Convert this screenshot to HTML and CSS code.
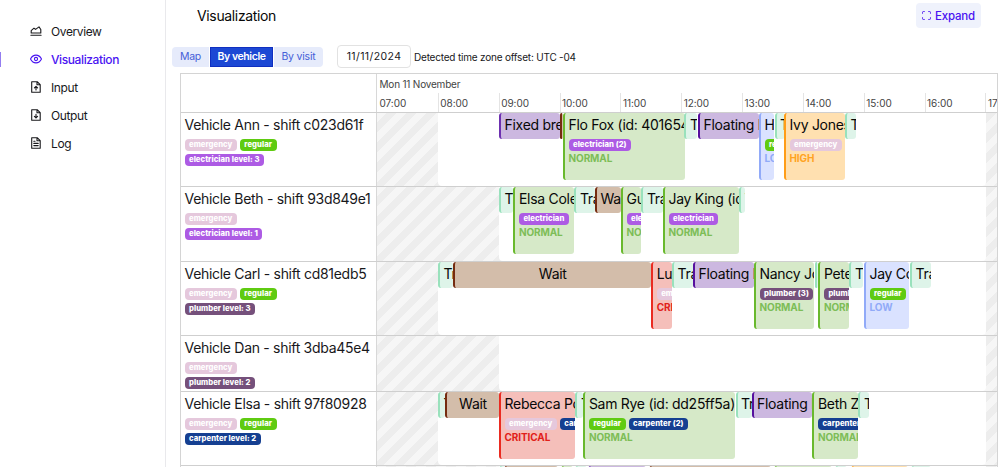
FILE: index.html
```html
<!DOCTYPE html>
<html lang="en">
<head>
<meta charset="utf-8">
<title>Visualization</title>
<link rel="stylesheet" href="styles.css">
</head>
<body>
<div class="app">
  <nav class="sidebar">
    <a class="nav"><svg class="ico" viewBox="0 0 12 12"><path d="M1.2 8V5.6L4 3.2l1.6 1.2L9 1.900l1.800 2.600V8zM.9 10.300h10.200"/></svg><span>Overview</span></a>
    <a class="nav active"><svg class="ico" viewBox="0 0 12 12"><path d="M.5 6C1.8 3.4 3.7 2.1 6 2.1S10.200 3.400 11.500 6C10.200 8.600 8.300 9.900 6 9.900S1.800 8.600.5 6z"/><circle cx="6" cy="6" r="1.600"/></svg><span>Visualization</span></a>
    <a class="nav"><svg class="ico" viewBox="0 0 12 12"><path d="M1.700.700h5.500l3 3v7.600H1.700zM7 .800v3h3M6 9V5.300M4.400 6.900L6 5.300l1.600 1.600"/></svg><span>Input</span></a>
    <a class="nav"><svg class="ico" viewBox="0 0 12 12"><path d="M1.700.700h5.500l3 3v7.600H1.700zM7 .800v3h3M6 5.200v3.700M4.400 7.300L6 8.900l1.600-1.600"/></svg><span>Output</span></a>
    <a class="nav"><svg class="ico" viewBox="0 0 12 12"><path d="M1.700.700h5.500l3 3v7.600H1.700zM7 .800v3h3M3.800 4.200h1.200M3.800 6.400h4.400M3.800 8.600h4.400"/></svg><span>Log</span></a>
  </nav>
  <main class="main">
    <header class="head">
      <h1 class="title">Visualization</h1>
      <button class="expand"><svg class="corners" viewBox="0 0 10 10"><path d="M.6 3V1.600q0-1 1-1H3M7 .6h1.400q1 0 1 1V3M9.400 7v1.400q0 1-1 1H7M3 9.400H1.600q-1 0-1-1V7"/></svg><span>Expand</span></button>
    </header>
    <div class="toolbar">
      <div class="tabs"><span class="tab map">Map</span><span class="tab on">By vehicle</span><span class="tab visit">By visit</span></div>
      <span class="date">11/11/2024</span>
      <span class="zone">Detected time zone offset: UTC -04</span>
    </div>
    <section class="chart">
      <div class="row axis">
        <div class="label"></div>
        <div class="scale">
          <div class="day">Mon 11 November</div>
          <div class="hours"><span>07:00</span><span>08:00</span><span>09:00</span><span>10:00</span><span>11:00</span><span>12:00</span><span>13:00</span><span>14:00</span><span>15:00</span><span>16:00</span><span>17:00</span></div>
        </div>
      </div>
      <div class="row">
        <div class="label"><div class="name">Vehicle Ann - shift c023d61f</div><div class="tags"><b class="tag emergency">emergency</b><b class="tag regular">regular</b></div><div class="tags"><b class="tag electrician">electrician level: 3</b></div></div>
        <div class="lane">
          <div class="shift" style="--x:61px;--w:547.5px"></div>
          <div class="item break" style="--x:122px;--w:61px"><p>Fixed break</p></div>
          <div class="item wait sliver" style="--x:183px;--w:3px"></div>
          <div class="item normal" style="--x:186px;--w:121.500px"><p>Flo Fox (id: 401654ab)</p><div class="tags"><b class="tag electrician">electrician (2)</b></div><em>NORMAL</em></div>
          <div class="item travel" style="--x:307.400px;--w:13px"><p>Travel</p></div>
          <div class="item float" style="--x:321px;--w:61px"><p>Floating break</p></div>
          <div class="item low" style="--x:382px;--w:15px"><p>Hugo</p><div class="tags"><b class="tag regular">regular</b></div><em>LOW</em></div>
          <div class="item travel" style="--x:397.500px;--w:10px"><p>Travel</p></div>
          <div class="item high" style="--x:407px;--w:61px"><p>Ivy Jones (id: 7</p><div class="tags"><b class="tag emergency">emergency</b><b class="tag electrician">electrician</b></div><em>HIGH</em></div>
          <div class="item travel" style="--x:468px;--w:10.500px"><p>Travel</p></div>
        </div>
      </div>
      <div class="row tall">
        <div class="label"><div class="name">Vehicle Beth - shift 93d849e1</div><div class="tags"><b class="tag emergency">emergency</b></div><div class="tags"><b class="tag electrician">electrician level: 1</b></div></div>
        <div class="lane">
          <div class="shift" style="--x:122px;--w:486.500px"></div>
          <div class="item travel" style="--x:122px;--w:14px"><p>Travel</p></div>
          <div class="item normal" style="--x:136.400px;--w:60.500px"><p>Elsa Cole (id</p><div class="tags"><b class="tag electrician">electrician</b></div><em>NORMAL</em></div>
          <div class="item travel" style="--x:197.400px;--w:20.500px"><p>Travel</p></div>
          <div class="item wait" style="--x:218px;--w:25.500px"><p>Wait</p></div>
          <div class="item normal" style="--x:244px;--w:20px"><p>Gus</p><div class="tags"><b class="tag electrician">electrician</b></div><em>NORMAL</em></div>
          <div class="item travel" style="--x:264.400px;--w:21.500px"><p>Travel</p></div>
          <div class="item normal" style="--x:286px;--w:76px"><p>Jay King (id: 2</p><div class="tags"><b class="tag electrician">electrician</b></div><em>NORMAL</em></div>
          <div class="item travel" style="--x:362px;--w:6px"><p>Travel</p></div>
        </div>
      </div>
      <div class="row">
        <div class="label"><div class="name">Vehicle Carl - shift cd81edb5</div><div class="tags"><b class="tag emergency">emergency</b><b class="tag regular">regular</b></div><div class="tags"><b class="tag plumber">plumber level: 3</b></div></div>
        <div class="lane">
          <div class="shift" style="--x:61px;--w:547.500px"></div>
          <div class="item travel" style="--x:61px;--w:14.500px"><p>Travel</p></div>
          <div class="item wait center" style="--x:75.500px;--w:198.500px"><p>Wait</p></div>
          <div class="item critical" style="--x:274.200px;--w:20.400px"><p>Luna</p><div class="tags"><b class="tag emergency">emergency</b></div><em>CRITICAL</em></div>
          <div class="item travel" style="--x:295px;--w:21px"><p>Travel</p></div>
          <div class="item float" style="--x:316px;--w:61px"><p>Floating break</p></div>
          <div class="item normal" style="--x:377px;--w:60px"><p>Nancy Jones</p><div class="tags"><b class="tag plumber">plumber (3)</b></div><em>NORMAL</em></div>
          <div class="item travel sliver" style="--x:438px;--w:3px"></div>
          <div class="item normal" style="--x:441.400px;--w:30.500px"><p>Peter</p><div class="tags"><b class="tag plumber">plumber</b></div><em>NORMAL</em></div>
          <div class="item travel" style="--x:472.400px;--w:14px"><p>Travel</p></div>
          <div class="item low" style="--x:487px;--w:45px"><p>Jay Cole</p><div class="tags"><b class="tag regular">regular</b><b class="tag plumber faint">plumber</b></div><em>LOW</em></div>
          <div class="item travel" style="--x:533px;--w:21px"><p>Travel</p></div>
        </div>
      </div>
      <div class="row short">
        <div class="label"><div class="name">Vehicle Dan - shift 3dba45e4</div><div class="tags"><b class="tag emergency">emergency</b></div><div class="tags"><b class="tag plumber">plumber level: 2</b></div></div>
        <div class="lane"><div class="shift" style="--x:122px;--w:486.500px"></div></div>
      </div>
      <div class="row">
        <div class="label"><div class="name">Vehicle Elsa - shift 97f80928</div><div class="tags"><b class="tag emergency">emergency</b><b class="tag regular">regular</b></div><div class="tags"><b class="tag carpenter">carpenter level: 2</b></div></div>
        <div class="lane">
          <div class="shift" style="--x:61px;--w:547.500px"></div>
          <div class="item travel" style="--x:61px;--w:7px"><p>Travel</p></div>
          <div class="item wait center" style="--x:68px;--w:54px"><p>Wait</p></div>
          <div class="item critical" style="--x:122px;--w:76px"><p>Rebecca Poe</p><div class="tags"><b class="tag emergency">emergency</b><b class="tag carpenter">carpenter</b></div><em>CRITICAL</em></div>
          <div class="item travel" style="--x:198.400px;--w:7.500px"><p>Travel</p></div>
          <div class="item normal" style="--x:206.400px;--w:152px"><p>Sam Rye (id: dd25ff5a)</p><div class="tags"><b class="tag regular">regular</b><b class="tag carpenter">carpenter (2)</b></div><em>NORMAL</em></div>
          <div class="item travel" style="--x:358.500px;--w:16px"><p>Travel</p></div>
          <div class="item float" style="--x:374.500px;--w:60.500px"><p>Floating break</p></div>
          <div class="item normal" style="--x:435.400px;--w:45.500px"><p>Beth Zhu</p><div class="tags"><b class="tag carpenter">carpenter</b></div><em>NORMAL</em></div>
          <div class="item travel" style="--x:481.400px;--w:10.500px"><p>Travel</p></div>
        </div>
      </div>
      <div class="row">
        <div class="label"></div>
        <div class="lane">
          <div class="shift" style="--x:122px;--w:486.500px"></div>
          <div class="item travel" style="--x:122px;--w:4px"></div>
          <div class="item wait" style="--x:127px;--w:54px"></div>
          <div class="item normal" style="--x:184px;--w:12px"></div>
          <div class="item travel" style="--x:198px;--w:12px"></div>
          <div class="item break" style="--x:211px;--w:58px"></div>
          <div class="item wait" style="--x:272px;--w:122px"></div>
          <div class="item normal" style="--x:397px;--w:58px"></div>
          <div class="item travel" style="--x:458px;--w:12px"></div>
          <div class="item high" style="--x:474px;--w:57px"></div>
          <div class="item travel" style="--x:534px;--w:20px"></div>
        </div>
      </div>
    </section>
  </main>
</div>
</body>
</html>
```
FILE: styles.css
```css
* { box-sizing: border-box; }
body { margin: 0; background: #fff; color: #18181b; font-family: Inter, "Liberation Sans", sans-serif; }
p, h1 { margin: 0; font-weight: 400; }
.app { display: flex; width: 1000px; height: 467px; overflow: hidden; }

.sidebar { width: 166px; flex: none; border-right: 1px solid #e9e9ec; padding-top: 17px; }
.nav { display: flex; align-items: center; height: 28px; padding-left: 30px; gap: 9px; font-size: 12px; letter-spacing: -.4px; }
.ico { width: 12px; height: 12px; fill: none; stroke: currentColor; stroke-width: 1.1; stroke-linejoin: round; stroke-linecap: round; }
.active { color: #4a14f2; font-weight: 500; background: linear-gradient(#937df0, #937df0) 0 7px / 1px 15px no-repeat; }

.main { flex: none; width: 834px; }
.head { display: flex; justify-content: space-between; align-items: center; height: 31px; padding: 0 19px 0 31px; }
.title { font-size: 14px; line-height: 20px; letter-spacing: -.35px; color: #080808; }
.expand { display: flex; align-items: center; gap: 4px; width: 65px; height: 25px; padding: 0 0 0 6px; border: 0; border-radius: 4px; background: #eff2fc; color: #4a14f2; font: 500 11.5px Inter, sans-serif; letter-spacing: -.2px; }
.corners { width: 9px; height: 9px; fill: none; stroke: currentColor; stroke-width: 1.1; flex: none; }

.toolbar { display: flex; align-items: center; height: 23px; margin: 14px 0 5px 6px; }
.tabs { display: flex; gap: 1px; }
.tab { display: grid; place-items: center; height: 20px; background: #e6ebfb; color: #4560d8; font-size: 10.5px; letter-spacing: -.2px; }
.map { width: 37px; border-radius: 4px 0 0 4px; }
.on { width: 63px; background: #1c48d4; border: 1px solid #102fc0; color: #fff; font-weight: 600; letter-spacing: -.4px; }
.visit { width: 49px; border-radius: 0 4px 4px 0; }
.date { display: grid; place-items: center; width: 74px; height: 23px; margin-left: 14px; border: 1px solid #e2e2e2; border-radius: 4px; font-size: 10.5px; letter-spacing: .4px; }
.zone { margin-left: 3px; font-size: 10px; letter-spacing: -.2px; white-space: nowrap; }

.chart { width: 818px; margin-left: 14px; border: solid #d4d4d4; border-width: 1px 1px 0; }
.row { display: grid; grid-template-columns: 196px 620px; height: 74px; border-bottom: 1px solid #cfcfcf; }
.axis { height: 39px; }
.tall { height: 75px; }
.short { height: 56px; }
.label { padding: 3px 0 0 3.500px; border-right: 1px solid #d8d8d8; overflow: hidden; }
.name { height: 18px; margin: 0 0 5px; font-size: 14px; line-height: 17px; letter-spacing: -.3px; white-space: nowrap; }
.tags { display: flex; gap: 3px; height: 12px; margin-bottom: 3px; }
.tag { flex: none; height: 12px; padding: 0 4.500px; border-radius: 4px; color: #fff; font-size: 7.700px; line-height: 12px; font-weight: 800; letter-spacing: .04px; white-space: nowrap; }
.emergency { background: #e5c8dc; }
.regular { background: #5fcb11; }
.electrician { background: #ad5be4; }
.plumber { background: #75507b; }
.carpenter { background: #153f91; }
.faint { opacity: .15; }

.scale { overflow: hidden; color: #444; font-size: 10px; letter-spacing: -.2px; }
.day { height: 19px; padding: 3px 2.500px 0; line-height: 14px; }
.hours { display: flex; height: 19px; letter-spacing: -.05px; }
.hours span { flex: none; width: 60.850px; padding-left: 1.500px; line-height: 21px; border-left: 1px solid #e4e4e4; }
.hours span:first-child { border-left-color: transparent; }

.lane { display: grid; grid-template-columns: 620px; align-items: start; overflow: hidden; background: linear-gradient(135deg, #f6f6f6 25%, #ededed 25% 50%, #f6f6f6 50% 75%, #ededed 75%) 0 0 / 20px 20px; }
.shift, .item { grid-area: 1 / 1; margin-left: var(--x); width: var(--w); }
.shift { height: 100%; background: #fff; border-radius: 0 0 4px 4px; }
.item { height: 26px; padding: 3px 0 0 3.500px; border-left: 2px solid; border-radius: 3px; overflow: hidden; }
.item p { height: 18px; margin-bottom: 5px; color: #080808; font-size: 14px; line-height: 17px; letter-spacing: -.28px; white-space: nowrap; }
.item .tags { margin-bottom: 0; }
.item em { display: block; font-style: normal; font-weight: 700; font-size: 10px; line-height: 15px; letter-spacing: -.1px; }
.item.sliver { padding: 0; }
.item.center { padding-left: 0; text-align: center; }
.item.normal, .item.low, .item.high, .item.critical { height: 67px; }
.normal { background: #d6e9c8; border-color: #69b92d; }
.normal em { color: #7dbd57; }
.low { background: #dae2ff; border-color: #91aaf8; }
.low em { color: #91aaf8; }
.high { background: #ffe0b0; border-color: #ff9d17; }
.high em { color: #ffa322; }
.critical { background: #f5bfba; border-color: #ea2b21; }
.critical em { color: #e12119; }
.travel { background: #def4e9; border-color: #99e1bc; }
.break { background: #ccb8e0; border-color: #6d30b0; }
.float { background: #ccb8e0; border-color: #56109e; }
.wait { background: #d3bdaa; border-color: #752b10; }
```
